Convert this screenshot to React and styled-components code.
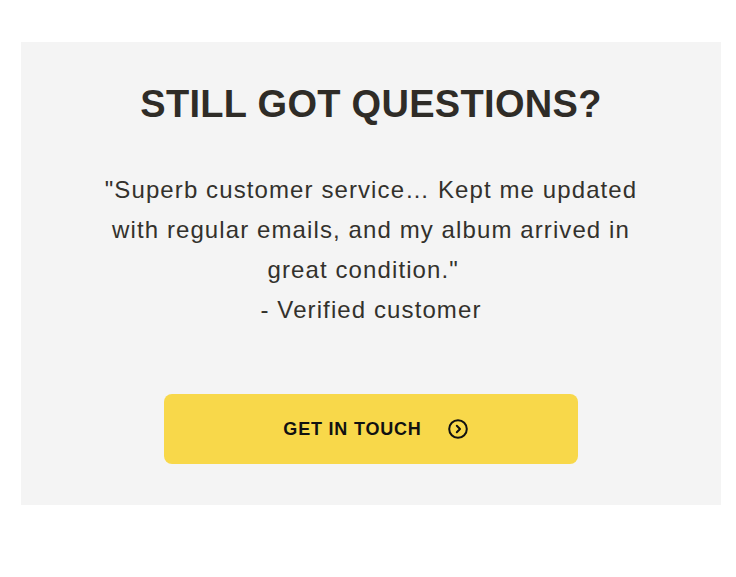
import React from 'react';
import styled, { createGlobalStyle } from 'styled-components';

const GlobalStyle = createGlobalStyle`
  body {
    margin: 0;
    background: #fff;
    font-family: "Liberation Sans", Arial, sans-serif;
  }
`;

const Page = styled.div`
  padding: 42px 15px 72px 21px;
`;

const Card = styled.section`
  width: 700px;
  box-sizing: border-box;
  background: #f4f4f4;
  padding: 40px 0 41px;
  display: flex;
  flex-direction: column;
  align-items: center;
  text-align: center;
`;

const Title = styled.h2`
  margin: 0;
  font-size: 38px;
  line-height: 44px;
  font-weight: 700;
  letter-spacing: 0.3px;
  color: #2f2c27;
`;

const Quote = styled.p`
  margin: 44px 0 0;
  width: 548px;
  font-size: 24px;
  line-height: 40px;
  letter-spacing: 1.1px;
  color: #33312c;
`;

const Button = styled.a`
  margin-top: 64px;
  width: 414px;
  height: 70px;
  box-sizing: border-box;
  border-radius: 8px;
  background: #f8d84a;
  display: flex;
  align-items: center;
  justify-content: center;
  gap: 26px;
  padding-left: 9px;
  font-size: 18px;
  font-weight: 700;
  letter-spacing: 0.8px;
  color: #111;
  text-decoration: none;
`;

const ArrowIcon = () => (
  <svg width="20" height="20" viewBox="0 0 20 20" fill="none">
    <circle cx="10" cy="10" r="8.8" stroke="#111" strokeWidth="2" />
    <path d="M8.8 6.8 L12 10 L8.8 13.2" stroke="#111" strokeWidth="2" strokeLinecap="round" strokeLinejoin="round" />
  </svg>
);

export default function App() {
  return (
    <>
      <GlobalStyle />
      <Page>
        <Card>
          <Title>STILL GOT QUESTIONS?</Title>
          <Quote>
            "Superb customer service… Kept me updated with regular emails, and my album arrived in great condition."{'\u00a0\u00a0'}
            <br />- Verified customer
          </Quote>
          <Button href="#">
            GET IN TOUCH
            <ArrowIcon />
          </Button>
        </Card>
      </Page>
    </>
  );
}
